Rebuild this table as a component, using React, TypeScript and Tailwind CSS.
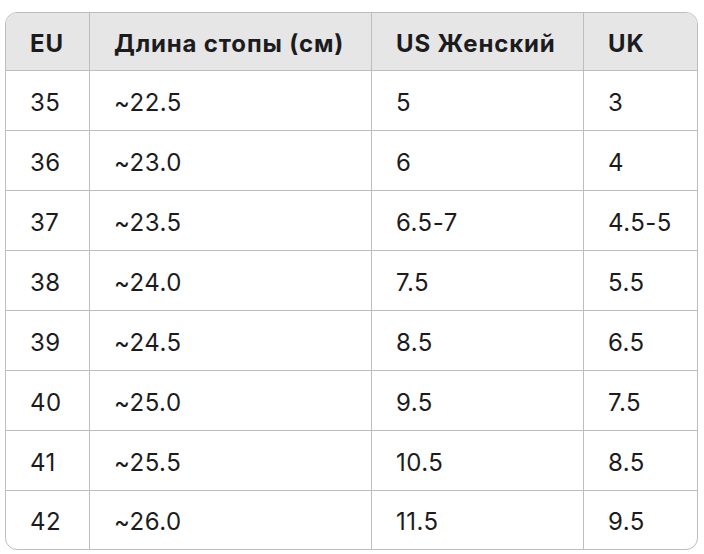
const headers = ['EU', 'Длина стопы (см)', 'US Женский', 'UK'];

const rows = [
  ['35', '~22.5', '5', '3'],
  ['36', '~23.0', '6', '4'],
  ['37', '~23.5', '6.5-7', '4.5-5'],
  ['38', '~24.0', '7.5', '5.5'],
  ['39', '~24.5', '8.5', '6.5'],
  ['40', '~25.0', '9.5', '7.5'],
  ['41', '~25.5', '10.5', '8.5'],
  ['42', '~26.0', '11.5', '9.5'],
];

const cols = 'grid grid-cols-[84px_282px_212px_113px]';

export default function App() {
  return (
    <div className="w-[704px] h-[554px] bg-white pt-[12px] pl-[5px] font-['Inter',sans-serif] text-[#1c1c1e]">
      <div className="w-[693px] rounded-[12px] border border-[#bdbdbd] overflow-hidden">
        <div className={`${cols} h-[58px] bg-[#e6e6e6] border-b border-[#bdbdbd]`}>
          {headers.map((h, i) => (
            <div
              key={h}
              className={`flex items-center pl-6 pt-[4px] text-[24px] tracking-[0.035em] font-bold ${i < 3 ? 'border-r border-[#bdbdbd]' : ''}`}
            >
              {h}
            </div>
          ))}
        </div>
        {rows.map((r, ri) => (
          <div
            key={r[0]}
            className={`${cols} ${ri < rows.length - 1 ? 'h-[60px] border-b border-[#bdbdbd]' : 'h-[58px]'}`}
          >
            {r.map((c, i) => (
              <div
                key={i}
                className={`flex items-center pl-6 pt-[4px] text-[24px] tracking-[0.02em] ${i < 3 ? 'border-r border-[#bdbdbd]' : ''}`}
              >
                {c}
              </div>
            ))}
          </div>
        ))}
      </div>
    </div>
  );
}
